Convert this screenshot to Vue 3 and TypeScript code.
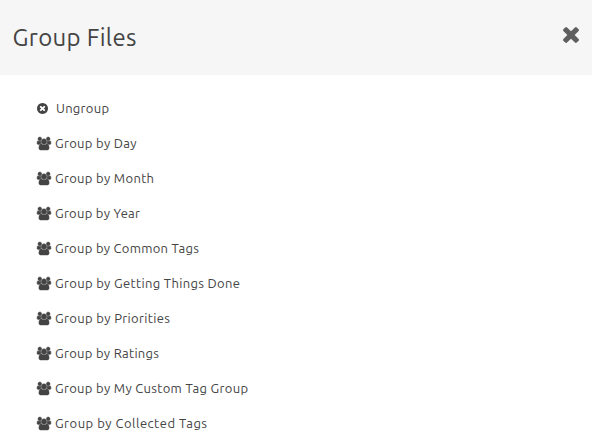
<script setup lang="ts">
import { onMounted, ref } from 'vue'

interface GroupOption {
  label: string
  width: number
}

const options: GroupOption[] = [
  { label: 'Ungroup', width: 53 },
  { label: 'Group by Day', width: 81.5 },
  { label: 'Group by Month', width: 99 },
  { label: 'Group by Year', width: 85 },
  { label: 'Group by Common Tags', width: 144 },
  { label: 'Group by Getting Things Done', width: 185 },
  { label: 'Group by Priorities', width: 115 },
  { label: 'Group by Ratings', width: 104 },
  { label: 'Group by My Custom Tag Group', width: 193 },
  { label: 'Group by Collected Tags', width: 152 },
]

const labels = ref<HTMLElement[]>([])
const tracking = ref<number[]>(options.map(() => 0))

// Spread each label's letters evenly over its intended width.
onMounted(() => {
  tracking.value = options.map((option, i) => {
    const natural = labels.value[i].getBoundingClientRect().width
    return (option.width - natural) / (option.label.length - 1)
  })
})
</script>

<template>
  <section class="dialog">
    <header class="header">
      <h1 class="title">Group Files</h1>
      <button class="close" aria-label="Close">
        <svg viewBox="302 366 1188 1188">
          <path d="M1490 1322q0 40-28 68l-136 136q-28 28-68 28t-68-28l-294-294-294 294q-28 28-68 28t-68-28l-136-136q-28-28-28-68t28-68l294-294-294-294q-28-28-28-68t28-68l136-136q28-28 68-28t68 28l294 294 294-294q28-28 68-28t68 28l136 136q28 28 28 68t-28 68l-294 294 294 294q28 28 28 68z" />
        </svg>
      </button>
    </header>
    <ul class="list">
      <li v-for="(option, i) in options" :key="option.label" class="item">
        <svg v-if="i === 0" class="icon ungroup" viewBox="128 128 1536 1536">
          <path d="M1277 1122q0-26-19-45l-181-181 181-181q19-19 19-45 0-27-19-46l-90-90q-19-19-46-19-26 0-45 19l-181 181-181-181q-19-19-45-19-27 0-46 19l-90 90q-19 19-19 46 0 26 19 45l181 181-181 181q-19 19-19 45 0 27 19 46l90 90q19 19 46 19 26 0 45-19l181-181 181 181q19 19 45 19 27 0 46-19l90-90q19-19 19-46zm387-226q0 209-103 385.5t-279.5 279.5-385.5 103-385.5-103-279.5-279.5-103-385.5 103-385.5 279.5-279.5 385.5-103 385.5 103 279.5 279.5 103 385.5z" />
        </svg>
        <svg v-else class="icon users" viewBox="-64 0 1920 1792">
          <path d="M529 896q-162 5-265 128h-134q-82 0-138-40.5t-56-118.5q0-353 124-353 6 0 43.5 21t97.5 42.5 119 21.5q67 0 133-23-5 37-5 66 0 139 81 256zm1071 637q0 120-73 189.5t-194 69.5h-874q-121 0-194-69.5t-73-189.5q0-53 3.5-103.5t14-109 26.5-108.5 43-97.5 62-81 85.5-53.5 111.5-20q10 0 43 21.5t73 48 107 48 135 21.5 135-21.5 107-48 73-48 43-21.5q61 0 111.5 20t85.5 53.5 62 81 43 97.5 26.5 108.5 14 109 3.5 103.5zm-1024-1277q0 106-75 181t-181 75-181-75-75-181 75-181 181-75 181 75 75 181zm704 384q0 159-112.5 271.5t-271.5 112.5-271.5-112.5-112.5-271.5 112.5-271.5 271.5-112.5 271.5 112.5 112.5 271.5zm576 225q0 78-56 118.5t-138 40.5h-134q-103-123-265-128 81-117 81-256 0-29-5-66 66 23 133 23 59 0 119-21.5t97.5-42.5 43.5-21q124 0 124 353zm-128-609q0 106-75 181t-181 75-181-75-75-181 75-181 181-75 181 75 75 181z" />
        </svg>
        <span ref="labels" class="label" :style="{ letterSpacing: tracking[i] + 'px' }">{{ option.label }}</span>
      </li>
    </ul>
  </section>
</template>

<style>
body {
  margin: 0;
  background: #fff;
  overflow: hidden;
}
</style>

<style scoped>
.dialog {
  height: 448px;
  overflow: hidden;
  color: #444;
  font-family: Ubuntu, 'Noto Sans', sans-serif;
}
.header {
  display: flex;
  justify-content: space-between;
  box-sizing: border-box;
  height: 75px;
  padding: 20px 13px 0 12.6px;
  border-top-left-radius: 2px;
  background: #f6f6f6;
}
.title {
  margin: 0;
  font-size: 24px;
  font-weight: 400;
  line-height: 35px;
  letter-spacing: 0.32px;
}
.close {
  display: block;
  width: 16px;
  height: 16px;
  margin-top: 7px;
  padding: 0;
  border: 0;
  background: none;
}
.close svg {
  display: block;
  width: 16px;
  height: 16px;
  fill: #5f5f5f;
}
.list {
  margin: 0;
  padding: 16px 0 0 37px;
  list-style: none;
}
.item {
  display: flex;
  align-items: center;
  height: 35px;
}
.icon {
  flex: none;
  fill: #444;
}
.ungroup {
  width: 11px;
  height: 11px;
  margin-right: 8px;
}
.users {
  width: 14px;
  height: 13px;
  margin-right: 4px;
  overflow: visible;
  stroke: #444;
  stroke-width: 60;
}
.label {
  padding-bottom: 2px;
  font-size: 13px;
  font-weight: 400;
  line-height: 20px;
  white-space: nowrap;
}
</style>
